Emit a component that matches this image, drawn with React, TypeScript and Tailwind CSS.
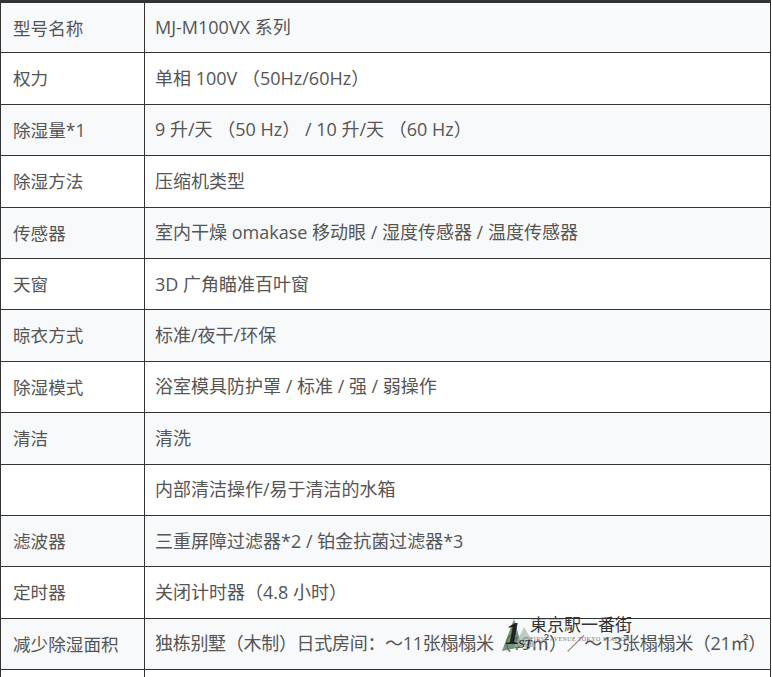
const rows: [string, string][] = [
  ["型号名称", "MJ-M100VX 系列"],
  ["权力", "单相 100V （50Hz/60Hz）"],
  ["除湿量*1", "9 升/天 （50 Hz） / 10 升/天 （60 Hz）"],
  ["除湿方法", "压缩机类型"],
  ["传感器", "室内干燥 omakase 移动眼 / 湿度传感器 / 温度传感器"],
  ["天窗", "3D 广角瞄准百叶窗"],
  ["晾衣方式", "标准/夜干/环保"],
  ["除湿模式", "浴室模具防护罩 / 标准 / 强 / 弱操作"],
  ["清洁", "清洗"],
  ["", "内部清洁操作/易于清洁的水箱"],
  ["滤波器", "三重屏障过滤器*2 / 铂金抗菌过滤器*3"],
  ["定时器", "关闭计时器（4.8 小时）"],
  ["减少除湿面积", "独栋别墅（木制）日式房间：～11张榻榻米（19㎡）／～13张榻榻米（21㎡）"],
  ["", ""],
];

function Watermark() {
  return (
    <div className="pointer-events-none absolute left-[500px] top-[613px] flex items-start">
      <svg width="36" height="40" viewBox="0 0 36 40">
        <polygon points="2,38 14,6 22,34" fill="#4f7a5e" opacity="0.8" />
        <polygon points="14,34 24,14 36,34" fill="#a7b8ab" opacity="0.7" />
        <text x="5" y="31" fontSize="32" fontStyle="italic" fontWeight="bold" fill="#222" fontFamily="Liberation Serif, serif">1</text>
        <text x="18" y="35" fontSize="13" fontStyle="italic" fill="#222" fontFamily="Liberation Serif, serif">ST</text>
      </svg>
      <div className="-ml-[6px] flex flex-col">
        <span className="text-[17px] leading-[22px] text-[#333] [font-family:'Noto_Sans_CJK_JP',serif]">東京駅一番街</span>
        <span className="text-[6px] leading-[8px] tracking-[0.4px] text-[#777] [font-family:'Liberation_Serif',serif]">FIRST AVENUE TOKYO STATION</span>
      </div>
    </div>
  );
}

export default function App() {
  return (
    <div className="relative h-[677px] w-[772px] overflow-hidden bg-white [font-family:'Open_Sans','Noto_Sans_CJK_SC',sans-serif]">
      <table className="w-[771px] table-fixed border-collapse border-t-[3px] border-t-[#333]">
        <colgroup>
          <col className="w-[144px]" />
          <col />
        </colgroup>
        <tbody>
          {rows.map(([label, value], i) => (
            <tr key={i} className={i % 2 === 0 ? "bg-[#f8f9fb]" : "bg-white"}>
              <td className="h-[51.4px] border border-[#333] pl-[12px] text-[17.6px] text-[#555] whitespace-nowrap">
                {label}
              </td>
              <td
                className={
                  i === 12
                    ? "h-[51.4px] border border-[#333] pl-[10px] text-[18px] tracking-[-0.3px] text-[#555] whitespace-nowrap"
                    : "h-[51.4px] border border-[#333] pl-[10px] text-[18px] text-[#555] whitespace-nowrap"
                }
              >
                {value}
              </td>
            </tr>
          ))}
        </tbody>
      </table>
      <Watermark />
    </div>
  );
}
